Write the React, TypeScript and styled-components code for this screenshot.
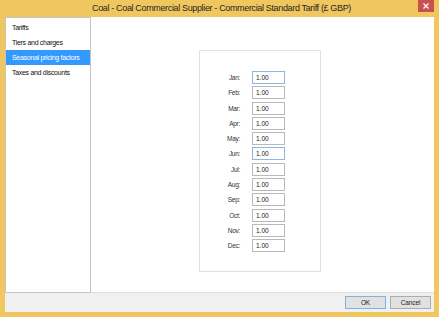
import React from 'react';
import styled, { createGlobalStyle } from 'styled-components';

const GlobalStyle = createGlobalStyle`
  html, body {
    margin: 0;
    padding: 0;
    background: #ffffff;
  }
  body {
    font-family: "Liberation Sans", Arial, sans-serif;
  }
`;

const frame = '#f0c75e';

const Window = styled.div`
  width: 439px;
  height: 317px;
  box-sizing: border-box;
  background: ${frame};
  border: 5px solid ${frame};
  border-top: 0;
  display: flex;
  flex-direction: column;
`;

const TitleBar = styled.div`
  height: 17px;
  flex: 0 0 17px;
  display: flex;
  align-items: center;
  justify-content: center;
  position: relative;
`;

const Title = styled.span`
  font-size: 9px;
  letter-spacing: -0.35px;
  color: #262626;
  line-height: 17px;
  padding-left: 4px;
`;

const CloseButton = styled.div`
  position: absolute;
  right: 0;
  top: 0;
  width: 16px;
  height: 12px;
  background: #c75050;
  display: flex;
  align-items: center;
  justify-content: center;
`;

const Body = styled.div`
  flex: 1;
  display: flex;
  background: #ffffff;
`;

const NavList = styled.div`
  width: 86px;
  box-sizing: border-box;
  border: 1px solid #c4c4c4;
  background: #ffffff;
  padding: 2px 0 0 0;
  display: flex;
  flex-direction: column;
`;

const NavItem = styled.div<{ $active?: boolean }>`
  height: 15px;
  line-height: 15px;
  padding-left: 6px;
  font-size: 7px;
  letter-spacing: -0.3px;
  color: ${(p) => (p.$active ? '#ffffff' : '#111111')};
  background: ${(p) => (p.$active ? '#3399ff' : 'transparent')};
  white-space: nowrap;
`;

const ContentPane = styled.div`
  flex: 1;
  border-bottom: 1px solid #dedede;
  padding: 33px 0 0 108px;
`;

const FactorsPanel = styled.div`
  width: 122px;
  height: 222px;
  box-sizing: border-box;
  border: 1px solid #e0e0e0;
  padding-top: 20px;
`;

const FactorGrid = styled.div`
  display: grid;
  grid-template-columns: 40px 33px;
  column-gap: 12px;
  row-gap: 2.3px;
  align-items: center;
`;

const MonthLabel = styled.span`
  font-size: 6.5px;
  letter-spacing: -0.3px;
  color: #333333;
  text-align: right;
`;

const FactorInput = styled.div<{ $highlight?: boolean }>`
  height: 13px;
  box-sizing: border-box;
  border: 1px solid ${(p) => (p.$highlight ? '#8db7e2' : '#b9b9b9')};
  font-size: 6.5px;
  line-height: 11px;
  padding-left: 3px;
  color: #222222;
  background: #ffffff;
`;

const Footer = styled.div`
  flex: 0 0 19px;
  background: #f0f0f0;
  display: flex;
  justify-content: flex-end;
  align-items: center;
  gap: 4px;
  padding-right: 3px;
`;

const DialogButton = styled.div<{ $default?: boolean }>`
  width: 41px;
  height: 13px;
  box-sizing: border-box;
  border: 1px solid ${(p) => (p.$default ? '#7fb1e3' : '#adadad')};
  background: #e1e1e1;
  font-size: 6.5px;
  letter-spacing: -0.1px;
  line-height: 11px;
  text-align: center;
  color: #222222;
`;

const months = ['Jan', 'Feb', 'Mar', 'Apr', 'May', 'Jun', 'Jul', 'Aug', 'Sep', 'Oct', 'Nov', 'Dec'];
const highlighted = ['Jan', 'Jun'];

export default function App() {
  return (
    <>
      <GlobalStyle />
      <Window>
        <TitleBar>
          <Title>Coal - Coal Commercial Supplier - Commercial Standard Tariff (£ GBP)</Title>
          <CloseButton>
            <svg width="6" height="6" viewBox="0 0 6 6">
              <path d="M0.5 0.5 L5.5 5.5 M5.5 0.5 L0.5 5.5" stroke="#ffffff" strokeWidth="1.3" />
            </svg>
          </CloseButton>
        </TitleBar>
        <Body>
          <NavList>
            <NavItem>Tariffs</NavItem>
            <NavItem>Tiers and charges</NavItem>
            <NavItem $active>Seasonal pricing factors</NavItem>
            <NavItem>Taxes and discounts</NavItem>
          </NavList>
          <ContentPane>
            <FactorsPanel>
              <FactorGrid>
                {months.map((m) => (
                  <React.Fragment key={m}>
                    <MonthLabel>{m}:</MonthLabel>
                    <FactorInput $highlight={highlighted.includes(m)}>1.00</FactorInput>
                  </React.Fragment>
                ))}
              </FactorGrid>
            </FactorsPanel>
          </ContentPane>
        </Body>
        <Footer>
          <DialogButton $default>OK</DialogButton>
          <DialogButton>Cancel</DialogButton>
        </Footer>
      </Window>
    </>
  );
}
